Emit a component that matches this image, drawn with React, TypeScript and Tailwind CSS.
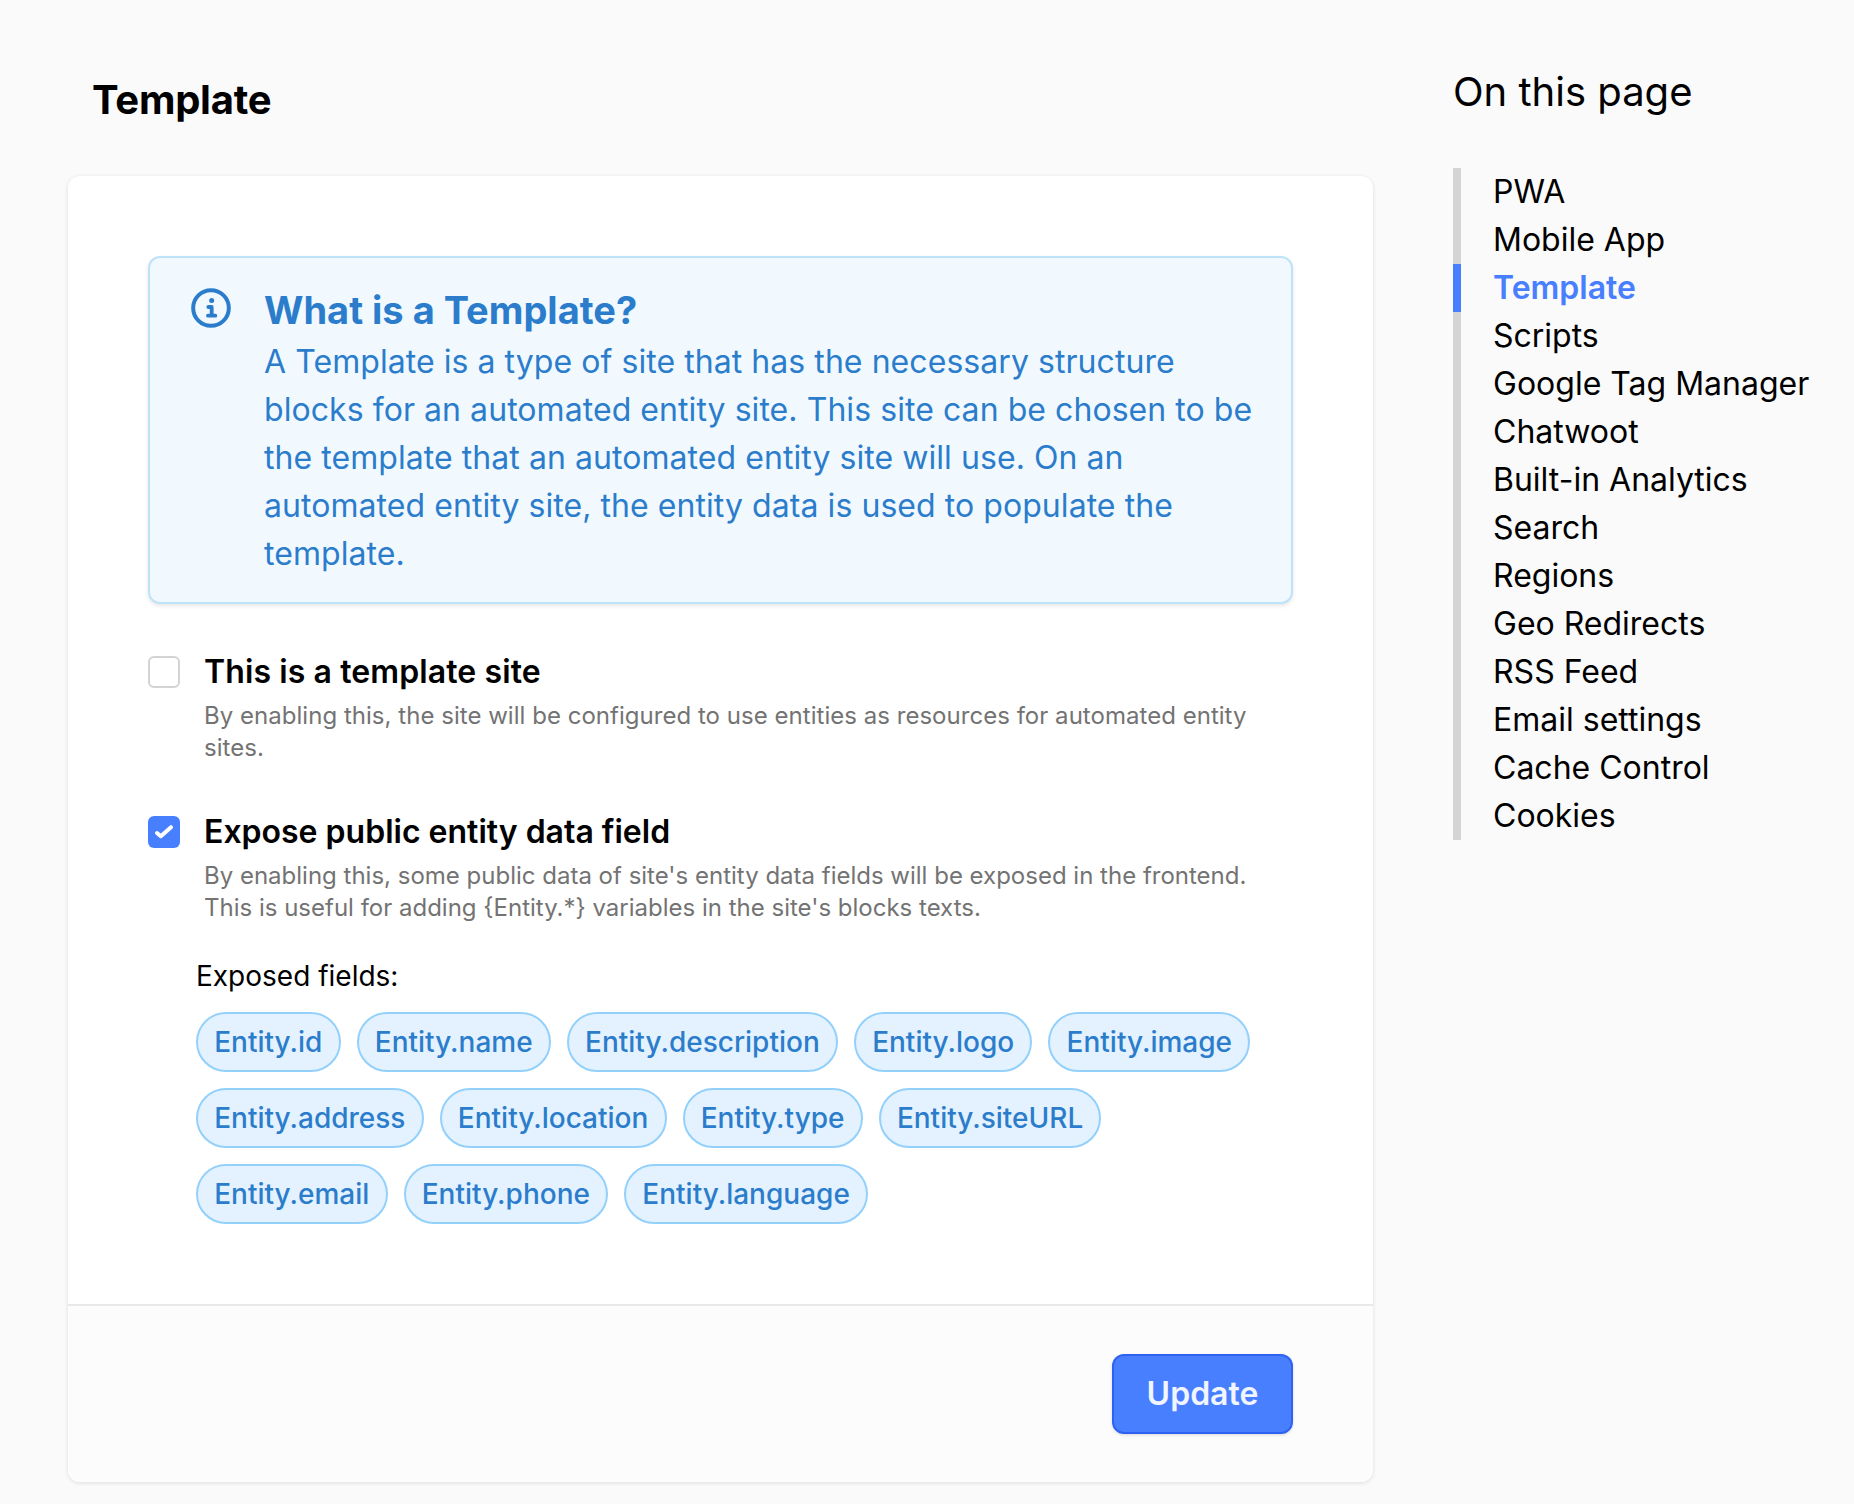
const toc = ["PWA","Mobile App","Template","Scripts","Google Tag Manager","Chatwoot","Built-in Analytics","Search","Regions","Geo Redirects","RSS Feed","Email settings","Cache Control","Cookies"];
const rows = [
  ["Entity.id","Entity.name","Entity.description","Entity.logo","Entity.image"],
  ["Entity.address","Entity.location","Entity.type","Entity.siteURL"],
  ["Entity.email","Entity.phone","Entity.language"],
];

export default function App() {
  return (
    <div className="h-[1504px] overflow-hidden bg-[#fafafa] flex font-['Inter',sans-serif] text-black">
      <main className="w-[1305px] ml-[68px] pt-[76px] shrink-0">
        <h1 className="ml-[24px] text-[40px] leading-[48px] font-bold h-[48px] tracking-[-0.25px]">Template</h1>
        <section className="mt-[52px] w-[1305px] h-[1306px] bg-white rounded-[12px] shadow-[0_1px_4px_rgba(0,0,0,0.12)] flex flex-col overflow-hidden">
          <div className="h-[1130px] px-[80px] pt-[80px] border-b-2 border-[#e8e8e8]">
            <div className="h-[348px] rounded-[12px] border-2 border-[#bee3f8] bg-[#f1f9ff] shadow-[0_2px_4px_rgba(0,0,0,0.1)] flex pl-[41px] pt-[30px] pr-[30px] text-[#2b7dcc]">
              <svg className="w-[40px] h-[40px] shrink-0" viewBox="0 0 24 24" fill="none" stroke="currentColor" strokeWidth="2.4" strokeLinecap="round" strokeLinejoin="round">
                <circle cx="12" cy="12" r="10.7" />
                <path d="M12.4 7.5h.01" strokeWidth="3" />
                <path d="M10.4 11.4h2v5.2M10.2 16.6h4.4" strokeWidth="2.3" />
              </svg>
              <div className="ml-[33px]">
                <h2 className="text-[38px] leading-[44px] font-bold mb-[6px]">What is a Template?</h2>
                <p className="text-[32px] leading-[48px] tracking-[0.06px]">A Template is a type of site that has the necessary structure blocks for an automated entity site. This site can be chosen to be the template that an automated entity site will use. On an automated entity site, the entity data is used to populate the template.</p>
              </div>
            </div>

            <div className="mt-[48px] flex">
              <span className="w-[32px] h-[32px] mt-[4px] rounded-[6px] border-2 border-[#d4d4d4] bg-white shrink-0" />
              <div className="ml-[24px]">
                <div className="text-[32px] leading-[40px] font-semibold tracking-[0.1px]">This is a template site</div>
                <p className="text-[24px] leading-[32px] text-[#737373] mt-[8px] tracking-[0.03px]">By enabling this, the site will be configured to use entities as resources for automated entity sites.</p>
              </div>
            </div>

            <div className="mt-[48px] flex">
              <span className="w-[32px] h-[32px] mt-[4px] rounded-[6px] bg-[#487fff] shrink-0 flex items-center justify-center">
                <svg className="w-[20px] h-[20px]" viewBox="0 0 20 20" fill="none" stroke="white" strokeWidth="4" strokeLinecap="round" strokeLinejoin="round"><path d="M3 11l3.8 3.2L17 5.2" /></svg>
              </span>
              <div className="ml-[24px]">
                <div className="text-[32px] leading-[40px] font-semibold">Expose public entity data field</div>
                <p className="text-[24px] leading-[32px] text-[#737373] mt-[8px]">{"By enabling this, some public data of site's entity data fields will be exposed in the frontend. This is useful for adding {Entity.*} variables in the site's blocks texts."}</p>
              </div>
            </div>

            <div className="ml-[48px] mt-[34px]">
              <div className="text-[28px] leading-[36px]">Exposed fields:</div>
              <div className="mt-[18px] flex flex-col gap-[16px]">
                {rows.map((r, i) => (
                  <div key={i} className="flex gap-[16px]">
                    {r.map(c => (
                      <span key={c} className="h-[60px] px-[16.2px] rounded-full border-2 border-[#93d0fb] bg-[#e3f2fe] text-[#2b7dcc] text-[28px] leading-[56px] font-medium">{c}</span>
                    ))}
                  </div>
                ))}
              </div>
            </div>
          </div>
          <div className="flex-1 bg-[#fcfcfc] flex justify-end items-start px-[80px] pt-[48px]">
            <button className="w-[181px] h-[80px] rounded-[12px] border-2 border-[#2f62f2] bg-[#487fff] text-[#f0f5ff] text-[32px] font-semibold shadow-[0_1px_3px_rgba(0,0,0,0.15)]">Update</button>
          </div>
        </section>
      </main>
      <aside className="ml-[80px] pt-[66px] flex-1">
        <div className="text-[40px] leading-[52px] h-[52px] whitespace-nowrap">On this page</div>
        <ul className="mt-[50px] border-l-[8px] border-[#d4d4d4]">
          {toc.map(t => (
            <li key={t} className={t === "Template" ? "relative h-[48px] pl-[32px] text-[32px] leading-[48px] font-semibold text-[#487fff] whitespace-nowrap" : "h-[48px] pl-[32px] text-[32px] leading-[48px] whitespace-nowrap"}>
              {t === "Template" && <span className="absolute left-[-8px] top-0 w-[8px] h-[48px] bg-[#487fff]" />}
              {t}
            </li>
          ))}
        </ul>
      </aside>
    </div>
  );
}
